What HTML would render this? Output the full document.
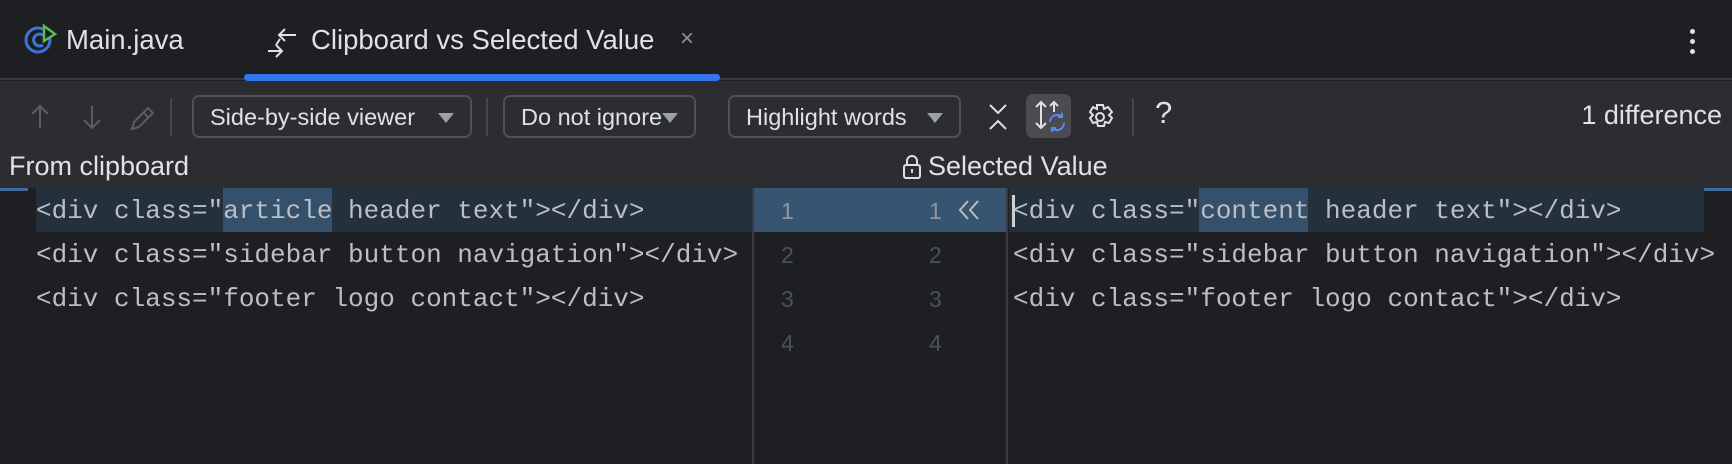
<!DOCTYPE html>
<html><head><meta charset="utf-8"><style>
*{margin:0;padding:0;box-sizing:border-box}
body{width:1732px;height:464px;background:#1e1f22;position:relative;overflow:hidden;font-family:"Liberation Sans",sans-serif;color:#dfe1e5}
.a{position:absolute}
.tabs{left:0;top:0;width:1732px;height:80px;background:#1e1f22;border-bottom:2px solid #393b40}
.tb{left:0;top:81px;width:1732px;height:107px;background:#2b2d30}
.t{font-size:27.5px;white-space:nowrap}
.dd{position:absolute;top:95px;height:43px;border:2px solid #4e5157;border-radius:7px;font-size:23.5px;padding:7px 0 0 16px;color:#dfe1e5;white-space:nowrap}
.dd:after{content:"";position:absolute;right:16px;top:16px;border-left:8px solid transparent;border-right:8px solid transparent;border-top:10px solid #9da0a8}
.sep{position:absolute;top:98px;width:2px;height:38px;background:#43454a}
.code{font-family:"Liberation Mono",monospace;font-size:26px;white-space:pre;color:#bcbec4;position:absolute}
.ln{font-family:"Liberation Sans",sans-serif;font-size:23px;color:#4b5059;position:absolute}
</style></head><body>
<div class="a tabs"></div>
<svg class="a" style="left:24px;top:22px" width="34" height="34" viewBox="0 0 34 34"><circle cx="14" cy="18" r="12" fill="none" stroke="#3d74d6" stroke-width="3"/><path d="M19 13a6 6 0 1 0 0 10" fill="none" stroke="#3d74d6" stroke-width="3"/><path d="M20 4 L31 12 L20 19Z" fill="#1e1f22" stroke="#5fb85a" stroke-width="2.5"/></svg>
<div class="a t" style="left:66px;top:24px;color:#dfe1e5">Main.java</div>
<svg class="a" style="left:266px;top:25px" width="34" height="34" viewBox="0 0 34 34" fill="none" stroke="#dfe1e5" stroke-width="2"><path d="M14 10h16M19 4l-6 6 6 6"/><path d="M2 26h14M10 20l6 6-6 6"/><path d="M10 20l4-6"/></svg>
<div class="a t" style="left:311px;top:24px;color:#dfe1e5">Clipboard vs Selected Value</div>
<div class="a" style="left:680px;top:25px;color:#8c8f96;font-size:24px">×</div>
<div class="a" style="left:244px;top:74px;width:476px;height:7px;background:#3574f0;border-radius:4px"></div>
<div class="a" style="left:1690px;top:29px;width:5px;height:5px;border-radius:3px;background:#dfe1e5;box-shadow:0 10px 0 #dfe1e5,0 20px 0 #dfe1e5"></div>

<div class="a tb"></div>
<svg class="a" style="left:28px;top:103px" width="130" height="28" viewBox="0 0 130 28" fill="none" stroke="#5a5d63" stroke-width="2"><path d="M12 3v22M4 11l8-8 8 8"/><path d="M64 3v22M56 17l8 8 8-8"/><path d="M104 26l2-7 14-14 5 5-14 14z M115 9l5 5"/></svg>
<div class="sep" style="left:170px"></div>
<div class="dd" style="left:192px;width:280px">Side-by-side viewer</div>
<div class="sep" style="left:486px"></div>
<div class="dd" style="left:503px;width:193px">Do not ignore</div>
<div class="dd" style="left:728px;width:233px">Highlight words</div>
<svg class="a" style="left:987px;top:103px" width="22" height="28" viewBox="0 0 22 28" fill="none" stroke="#dfe1e5" stroke-width="2"><path d="M3 2l8 8 8-8M3 26l8-8 8 8"/></svg>
<div class="a" style="left:1026px;top:94px;width:45px;height:44px;background:#4a4c51;border-radius:7px"></div>
<svg class="a" style="left:1031px;top:99px" width="36" height="34" viewBox="0 0 36 34" fill="none" stroke-width="2"><path d="M10 3v26M5 8l5-5 5 5M5 24l5 5 5-5" stroke="#dfe1e5"/><path d="M23 3v10M19 7l4-4 4 4" stroke="#dfe1e5"/><path d="M19 23a7 7 0 0 1 12-5M33 24a7 7 0 0 1-12 5M31 14v4h-4M21 33v-4h4" stroke="#548af7"/></svg>
<svg class="a" style="left:1086px;top:103px" width="28" height="28" viewBox="0 0 28 28" fill="none" stroke="#dfe1e5" stroke-width="2"><path d="M11 2h6l1 4 4-2 4 5-3 3 3 3 0 0-3 5 -4-1-1 4h-6l-1-4-4 1-3-5 3-3-3-3 3-5 4 2z"/><circle cx="14" cy="14" r="4"/></svg>
<div class="sep" style="left:1132px"></div>
<div class="a" style="left:1155px;top:95px;font-size:31px;color:#dfe1e5">?</div>
<div class="a" style="right:10px;top:100px;font-size:27px;color:#dfe1e5">1 difference</div>

<div class="a" style="left:9px;top:151px;font-size:27px">From clipboard</div>
<svg class="a" style="left:902px;top:154px" width="20" height="26" viewBox="0 0 20 26" fill="none" stroke="#dfe1e5" stroke-width="2"><rect x="2" y="11" width="16" height="13" rx="2"/><path d="M5 11V7a5 5 0 0 1 10 0v4M10 15v4"/></svg>
<div class="a" style="left:928px;top:151px;font-size:27px">Selected Value</div>
<div class="a" style="left:0;top:188px;width:1732px;height:276px;background:#1e1f22"></div>
<div class="a" style="left:0;top:188px;width:28px;height:3px;background:#3f6c9c"></div>
<div class="a" style="left:1704px;top:188px;width:28px;height:3px;background:#3f6c9c"></div>
<div class="a" style="left:36px;top:188px;width:717px;height:44px;background:#25303d"></div>
<div class="a" style="left:223px;top:188px;width:109px;height:44px;background:#34506a"></div>
<div class="a" style="left:754px;top:188px;width:253px;height:44px;background:#375470"></div>
<div class="a" style="left:1009px;top:188px;width:695px;height:44px;background:#25303d"></div>
<div class="a" style="left:1199px;top:188px;width:109px;height:44px;background:#34506a"></div>
<div class="a" style="left:752px;top:188px;width:2px;height:276px;background:#393b40"></div>
<div class="a" style="left:1006px;top:188px;width:2px;height:276px;background:#393b40"></div>
<div class="a" style="left:1012px;top:195px;width:3px;height:32px;background:#ced0d6"></div>
<div class="code" style="left:36px;top:189px;line-height:44px">&lt;div class="article header text"&gt;&lt;/div&gt;
&lt;div class="sidebar button navigation"&gt;&lt;/div&gt;
&lt;div class="footer logo contact"&gt;&lt;/div&gt;</div>
<div class="code" style="left:1013px;top:189px;line-height:44px">&lt;div class="content header text"&gt;&lt;/div&gt;
&lt;div class="sidebar button navigation"&gt;&lt;/div&gt;
&lt;div class="footer logo contact"&gt;&lt;/div&gt;</div>
<div class="ln" style="left:781px;top:189px;line-height:44px;color:#8e97a3">1</div>
<div class="ln" style="left:929px;top:189px;line-height:44px;color:#8e97a3">1</div>
<div class="ln" style="left:781px;top:233px;line-height:44px">2<br>3<br>4</div>
<div class="ln" style="left:929px;top:233px;line-height:44px">2<br>3<br>4</div>
<svg class="a" style="left:958px;top:199px" width="24" height="22" viewBox="0 0 24 22" fill="none" stroke="#b8bcc4" stroke-width="2"><path d="M10 2L2 11l8 9M20 2l-8 9 8 9"/></svg>
</body></html>
